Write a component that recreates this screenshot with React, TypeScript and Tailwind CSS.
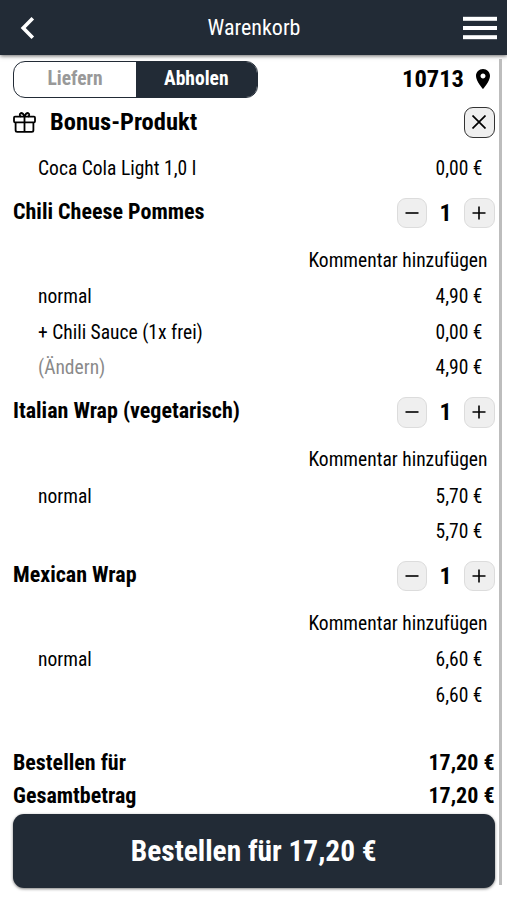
import React from 'react';

interface CartLine {
    label: string;
    price: string;
    muted?: boolean;
}

interface CartItem {
    name: string;
    quantity: number;
    lines: CartLine[];
}

const items: CartItem[] = [
    {
        name: 'Chili Cheese Pommes',
        quantity: 1,
        lines: [
            { label: 'normal', price: '4,90 €' },
            { label: '+ Chili Sauce (1x frei)', price: '0,00 €' },
            { label: '(Ändern)', price: '4,90 €', muted: true },
        ],
    },
    {
        name: 'Italian Wrap (vegetarisch)',
        quantity: 1,
        lines: [
            { label: 'normal', price: '5,70 €' },
            { label: '', price: '5,70 €' },
        ],
    },
    {
        name: 'Mexican Wrap',
        quantity: 1,
        lines: [
            { label: 'normal', price: '6,60 €' },
            { label: '', price: '6,60 €' },
        ],
    },
];

const totals = [
    { label: 'Bestellen für', price: '17,20 €' },
    { label: 'Gesamtbetrag', price: '17,20 €' },
];

const BackIcon = () => (
    <svg className="w-[15px] h-[24px]" viewBox="0 0 15 24" fill="none" stroke="currentColor" strokeWidth="3.6">
        <path d="M12.8 2.2 L3.2 12 L12.8 21.8" />
    </svg>
);

const MenuIcon = () => (
    <svg className="w-[34px] h-[24px]" viewBox="0 0 34 24" fill="currentColor">
        <rect y="0.8" width="34" height="4" />
        <rect y="10" width="34" height="4" />
        <rect y="19.2" width="34" height="4" />
    </svg>
);

const GiftIcon = () => (
    <svg className="w-[23px] h-[21px]" viewBox="0 0 23 21" fill="none" stroke="currentColor" strokeWidth="1.8">
        <rect x="1" y="4.7" width="21" height="5.6" rx="1" />
        <path d="M2.6 10.3 V18.2 Q2.6 19.8 4.2 19.8 H18.8 Q20.4 19.8 20.4 18.2 V10.3 M11.5 4.7 V19.8" />
        <path d="M11.5 4.7 C10.6 1.9 9.3 1 8 1 A2 2 0 0 0 8 4.7 M11.5 4.7 C12.4 1.9 13.7 1 15 1 A2 2 0 0 1 15 4.7" />
    </svg>
);

const PinIcon = () => (
    <svg className="w-[14px] h-[20px]" viewBox="5 2 14 20" fill="currentColor">
        <path d="M12 2C8.13 2 5 5.13 5 9c0 5.25 7 13 7 13s7-7.75 7-13c0-3.87-3.13-7-7-7zm0 9.5c-1.38 0-2.5-1.12-2.5-2.5s1.12-2.5 2.5-2.5 2.5 1.12 2.5 2.5-1.12 2.5-2.5 2.5z" />
    </svg>
);

const QuantityButton: React.FC<{ kind: 'minus' | 'plus' }> = ({ kind }) => (
    <button className="flex items-center justify-center w-[30.5px] h-[30.5px] rounded-[9px] border border-[#dcdcdc] bg-[#efefef]">
        <svg className="w-[14px] h-[14px]" viewBox="0 0 14 14" stroke="currentColor" strokeWidth="1.6">
            <path d={kind === 'plus' ? 'M0.5 7 H13.5 M7 0.5 V13.5' : 'M0.5 7 H13.5'} />
        </svg>
    </button>
);

const LineRow: React.FC<CartLine> = ({ label, price, muted }) => (
    <div className="flex items-center justify-between h-[35.5px] pl-[25px] pr-[12px]">
        <span className={muted ? 'text-[#8a8a8a]' : ''}>{label}</span>
        <span>{price}</span>
    </div>
);

const ItemBlock: React.FC<{ item: CartItem }> = ({ item }) => (
    <div className="mb-[3.6px]">
        <div className="flex items-center justify-between h-[46px]">
            <h2 className="text-[22px] font-bold pb-0.5">{item.name}</h2>
            <div className="flex items-center">
                <QuantityButton kind="minus" />
                <span className="w-[37px] text-center text-2xl font-bold">{item.quantity}</span>
                <QuantityButton kind="plus" />
            </div>
        </div>
        <div className="flex items-center justify-end h-[43.25px] pt-[5.5px] pr-[7px]">Kommentar hinzufügen</div>
        {item.lines.map((line, i) => (
            <LineRow key={i} {...line} />
        ))}
    </div>
);

const App: React.FC = () => {
    return (
        <div className="flex flex-col w-[507px] h-[900px] overflow-hidden bg-white text-black text-[19.55px] leading-none whitespace-nowrap font-['Roboto_Condensed','Roboto',sans-serif] font-stretch-75%">
            <header className="flex items-center justify-between h-[55px] shrink-0 pl-[20px] pr-[10px] bg-[#222b36] text-white shadow-[0_1px_4px_rgba(0,0,0,0.6)]">
                <div className="w-[34px]"><BackIcon /></div>
                <h1 className="text-[22px] pr-[9px]">Warenkorb</h1>
                <MenuIcon />
            </header>

            <div className="flex flex-1">
                <main className="flex flex-col w-[481.5px] ml-[13px] pt-[6px]">
                    <div className="flex items-center justify-between h-[36px]">
                        <div className="flex w-[244.5px] h-[37px] rounded-[12px] border border-[#222b36] overflow-hidden font-bold">
                            <button className="w-[122px] text-[#999999]">Liefern</button>
                            <button className="flex-1 bg-[#222b36] text-white">Abholen</button>
                        </div>
                        <div className="flex items-center gap-[11.5px] pr-[5px] text-[24.5px] font-bold">
                            <span>10713</span>
                            <PinIcon />
                        </div>
                    </div>

                    <div className="flex items-center justify-between h-[50px]">
                        <div className="flex items-center gap-[14px]">
                            <GiftIcon />
                            <h2 className="text-[24.5px] font-bold">Bonus-Produkt</h2>
                        </div>
                        <button className="flex items-center justify-center w-[31px] h-[31px] rounded-[9px] border border-[#333333] bg-[#efefef]">
                            <svg className="w-[14px] h-[14px]" viewBox="0 0 14 14" stroke="currentColor" strokeWidth="1.7">
                                <path d="M0.5 0.5 L13.5 13.5 M13.5 0.5 L0.5 13.5" />
                            </svg>
                        </button>
                    </div>
                    <div className="flex items-center justify-between h-[43px] pl-[25px] pr-[12px]">
                        <span>Coca Cola Light 1,0 l</span>
                        <span>0,00 €</span>
                    </div>

                    {items.map((item) => (
                        <ItemBlock key={item.name} item={item} />
                    ))}

                    <div className="mt-auto">
                        {totals.map((total) => (
                            <div key={total.label} className="flex items-center justify-between h-[33px] text-[22px] font-bold">
                                <span>{total.label}</span>
                                <span>{total.price}</span>
                            </div>
                        ))}
                    </div>
                    <button className="h-[73.5px] mt-[2px] mb-[12.5px] pt-[1.5px] shrink-0 rounded-[11px] bg-[#222b36] text-white text-[29.4px] font-bold shadow-[0_1px_3px_rgba(0,0,0,0.5)]">
                        Bestellen für 17,20 €
                    </button>
                </main>
                <div className="w-[3px] ml-[4px] mt-[4px] mb-[15px] bg-[#bdbdbd]" />
            </div>
        </div>
    );
};

export default App;
